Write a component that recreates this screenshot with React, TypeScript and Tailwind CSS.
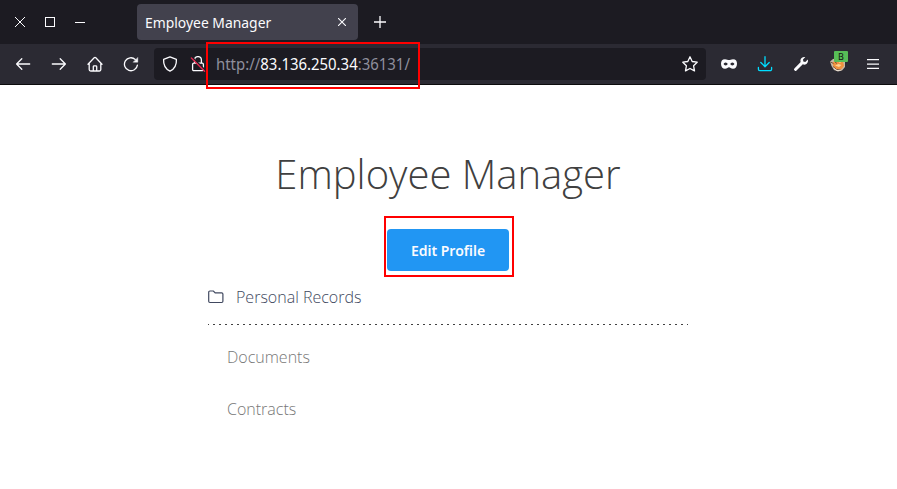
import React from 'react';

type IconProps = { children: React.ReactNode; className?: string };

const Icon = ({ children, className = '' }: IconProps) => (
  <svg
    viewBox="0 0 16 16"
    className={`h-4 w-4 shrink-0 ${className}`}
    fill="none"
    stroke="currentColor"
    strokeWidth="1.3"
    strokeLinecap="round"
    strokeLinejoin="round"
  >
    {children}
  </svg>
);

const Slot = ({ children }: { children: React.ReactNode }) => (
  <button className="flex h-8 w-9 shrink-0 items-center justify-center">{children}</button>
);

function TitleBar() {
  return (
    <div className="flex h-11 bg-[#1c1b22] pt-1">
      <div className="flex h-9 w-[137px] shrink-0 items-center pl-[5px]">
        <button className="flex w-[30px] justify-center">
          <svg viewBox="0 0 10 10" className="h-2.5 w-2.5" stroke="currentColor" strokeWidth="1"><path d="M0 0L10 10M10 0L0 10" /></svg>
        </button>
        <button className="flex w-[30px] justify-center">
          <span className="h-2.5 w-2.5 border border-[#fbfbfe]" />
        </button>
        <button className="flex w-[30px] justify-center">
          <span className="h-px w-2.5 bg-[#fbfbfe]" />
        </button>
      </div>
      <div className="flex h-9 w-[221px] shrink-0 items-center justify-between rounded bg-[#42414d] pr-3 pl-2">
        <span className="origin-left scale-x-[0.926] text-[15px] leading-5 whitespace-nowrap">Employee Manager</span>
        <svg viewBox="0 0 8 8" className="h-2 w-2" stroke="currentColor" strokeWidth="1.1"><path d="M0 0L8 8M8 0L0 8" /></svg>
      </div>
      <button className="flex h-9 w-11 items-center justify-center">
        <svg viewBox="0 0 12 12" className="h-3 w-3" stroke="currentColor" strokeWidth="1.3"><path d="M6 0V12M0 6H12" /></svg>
      </button>
    </div>
  );
}

function NavBar() {
  return (
    <div className="flex h-[41px] items-center border-b border-[#0c0c0d] bg-[#2b2a33] pl-[5px]">
      <Slot><Icon><path d="M14.7 8H1.6M6.8 2.8L1.6 8l5.2 5.2" /></Icon></Slot>
      <Slot><Icon><path d="M1.3 8h13.1M9.2 2.8L14.4 8l-5.2 5.2" /></Icon></Slot>
      <Slot><Icon><path d="M1 8.2L7.2 1.7a1.1 1.1 0 0 1 1.6 0l6.2 6.5M2.2 7.2v6.3a1.5 1.5 0 0 0 1.5 1.5h8.6a1.5 1.5 0 0 0 1.5-1.5V7.2M6.3 14.8v-4.2a.8.8 0 0 1 .8-.8h1.8a.8.8 0 0 1 .8.8v4.2" /></Icon></Slot>
      <Slot><Icon><path d="M14.4 9.1A6.5 6.5 0 1 1 12.3 3.4" /><path d="M14.8 1.7v4.5h-4.5z" fill="currentColor" strokeWidth=".4" /></Icon></Slot>
      <div className="ml-[5px] flex h-8 w-[552px] shrink-0 items-center rounded bg-[#1c1b22] pl-2">
        <Icon><path d="M8 .8l6.4 2.5c.3 5-1.5 9.6-6.4 11.9C3.1 12.9 1.3 8.3 1.6 3.3z" /></Icon>
        <Icon className="ml-3"><path d="M4.6 7V4a3.4 3.4 0 0 1 6.8 0v3M3.8 7.2h8.4a1.2 1.2 0 0 1 1.2 1.2v5a1.2 1.2 0 0 1-1.2 1.2H3.8a1.2 1.2 0 0 1-1.2-1.2v-5a1.2 1.2 0 0 1 1.2-1.2z" /><path d="M2.6 1.8L15.4 14.4" stroke="#1c1b22" strokeWidth="1.6" /><path d="M1.4 2L14.6 15.2" stroke="#e22850" strokeWidth="1.4" /></Icon>
        <span className="ml-2.5 origin-left scale-x-[0.933] text-[16px] leading-6 whitespace-nowrap text-[#8f8f9d]">
          http://<span className="text-[#fbfbfe]">83.136.250.34</span>:36131/
        </span>
        <Icon className="mr-2 ml-auto"><path d="M8 .8l2.2 4.7 5 .7-3.6 3.6.9 5.1L8 12.5l-4.5 2.4.9-5.1L.8 6.2l5-.7z" /></Icon>
      </div>
      <div className="ml-[5px] flex">
        <Slot><Icon><path stroke="none" fill="currentColor" fillRule="evenodd" d="M4 3.2c2 0 2.8.9 4 .9s2-.9 4-.9c3 0 4 1.9 4 4.5 0 3-1.6 5.1-4 5.1-2.2 0-2.8-1.5-4-1.5s-1.8 1.5-4 1.5c-2.4 0-4-2.1-4-5.1C0 5.1 1 3.2 4 3.2zM4.6 6.4C3.6 6.4 2.9 7.3 2.6 8c.4.8 1.1 1.4 2 1.4 1.1 0 1.8-.7 2.1-1.4-.3-.7-1-1.6-2.1-1.6zm6.8 0c-1.1 0-1.8.9-2.1 1.6.3.7 1 1.4 2.1 1.4.9 0 1.6-.6 2-1.4-.3-.7-1-1.6-2-1.6z" /></Icon></Slot>
        <Slot><Icon className="text-[#00ddff]"><path d="M8 .7v9.9M3.8 6.5L8 10.7l4.2-4.2M1.4 11.5v1.8a1.4 1.4 0 0 0 1.4 1.4h10.4a1.4 1.4 0 0 0 1.4-1.4v-1.8" /></Icon></Slot>
        <Slot><Icon><path stroke="none" fill="currentColor" d="M14.8 3.6l-2.5 2.3-2-.3-.3-2 2.3-2.5C10.2.4 7.5 2 7.4 4.5c0 .6.1 1.1.3 1.6L1.4 12.4a1.2 1.2 0 0 0 0 1.8l.3.3a1.2 1.2 0 0 0 1.8 0l6.3-6.2c.5.3 1 .4 1.6.4 2.4 0 4.2-2.5 3.4-5.1z" /></Icon></Slot>
        <button className="relative flex h-8 w-[37px] items-center justify-center">
          <svg viewBox="0 0 16 16" className="h-4 w-4">
            <path d="M0 5.5L3 3l6-1 6 3v6l-3 3.5-4 1-4-1.5-2.5-4z" fill="#c9b8a5" />
            <path d="M2.5 6.5L6 4l7 1 1 5-3 3.5-4 .5-3.5-3z" fill="#f0923f" />
            <path d="M.5 6l3 1.5M3 10.5l3.5 3 4.5.5M5 6l2 1.5" fill="none" stroke="#6b4a3a" strokeWidth=".9" />
            <path d="M5 9.5L8.5 8l3 1L9 11zM8 5.5l3 .5-1 1z" fill="#ffd292" />
            <path d="M3.5 12l3.5 2.6 4-.4" fill="none" stroke="#eee5da" strokeWidth=".9" />
          </svg>
          <span className="absolute top-[3px] left-[15px] flex h-[11px] w-3.5 items-center justify-center rounded-[1px] bg-[#57bd57] text-[9px] leading-none text-[#111]">B</span>
        </button>
        <button className="flex h-8 w-[34px] items-center justify-center">
          <svg viewBox="0 0 12 10" className="h-2.5 w-3" stroke="currentColor" strokeWidth="1.25"><path d="M0 .6h12M0 5h12M0 9.4h12" /></svg>
        </button>
      </div>
    </div>
  );
}

export default function App() {
  return (
    <div className="relative h-[489px] w-[897px] overflow-hidden bg-white font-['Noto_Sans',sans-serif] text-[#fbfbfe]">
      <header>
        <TitleBar />
        <NavBar />
      </header>
      <main className="ml-52 w-[480px] pt-[59px] font-['Open_Sans',sans-serif]">
        <h1 className="h-[61px] text-center text-[40px] leading-[60px] font-light whitespace-nowrap text-[#404040]">Employee Manager</h1>
        <div className="flex pt-6 pl-[179px]">
          <button className="h-[42px] w-[122px] rounded bg-[#2196f3] font-['Noto_Sans',sans-serif] text-[14px] font-semibold">Edit Profile</button>
        </div>
        <div className="flex h-[53px] items-center pb-0.5 text-[#414960]">
          <svg viewBox="0 0 16 14" className="h-3.5 w-4" fill="none" stroke="currentColor" strokeWidth="1.2"><path d="M.7 2.2A1.2 1.2 0 0 1 1.9 1h3.5l1.8 1.9h6.5A1.2 1.2 0 0 1 14.9 4v7.3a1.2 1.2 0 0 1-1.2 1.2H1.9a1.2 1.2 0 0 1-1.2-1.2z" /></svg>
          <span className="ml-3 text-[16px] leading-6 font-light">Personal Records</span>
        </div>
        <div className="h-px bg-[repeating-linear-gradient(90deg,#414141_0_1px,transparent_1px_5px,#414141_5px_6px)]" />
        <ul className="pt-1.5 pl-[19px] text-[16px] font-light text-[#777]">
          <li className="h-[52px] leading-[52px]">Documents</li>
          <li className="h-[52px] leading-[52px]">Contracts</li>
        </ul>
      </main>
      <div className="absolute top-[42px] left-[206px] h-[47px] w-[214px] border-2 border-[#ff0000]" />
      <div className="absolute top-[216px] left-[384px] h-[61px] w-[130px] border-2 border-[#ff0000]" />
    </div>
  );
}
